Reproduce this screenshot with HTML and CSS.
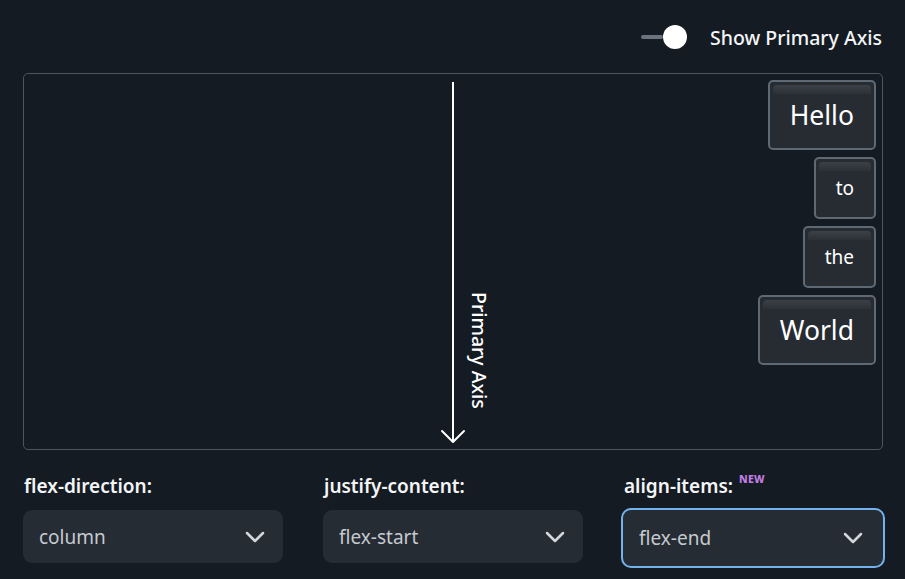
FILE: index.html
```html
<!DOCTYPE html>
<html lang="en">
<head>
<meta charset="utf-8">
<link rel="stylesheet" href="styles.css">
</head>
<body>
<main class="page">
  <div class="toolbar">
    <label class="toggle">
      <span class="switch"><span class="track"></span><span class="knob"></span></span>
      <span class="toggle-label">Show Primary Axis</span>
    </label>
  </div>
  <div class="demo">
    <div class="item big">Hello</div>
    <div class="item small">to</div>
    <div class="item small">the</div>
    <div class="item big">World</div>
    <div class="axis">
      <svg class="axis-svg" width="26" height="362" viewBox="0 0 26 362">
        <line x1="13" y1="0" x2="13" y2="359" stroke="#fff" stroke-width="2"/>
        <polyline points="2,349 13,360 24,349" fill="none" stroke="#fff" stroke-width="2" stroke-linecap="round" stroke-linejoin="round"/>
      </svg>
      <span class="axis-label">Primary Axis</span>
    </div>
  </div>
  <div class="controls">
    <div class="control">
      <div class="label">flex-direction:</div>
      <div class="select"><span>column</span><svg class="chev" width="20" height="12" viewBox="0 0 20 12"><polyline points="2,2 10,10 18,2" fill="none" stroke="#d3d7db" stroke-width="2.5" stroke-linecap="round" stroke-linejoin="round"/></svg></div>
    </div>
    <div class="control">
      <div class="label">justify-content:</div>
      <div class="select"><span>flex-start</span><svg class="chev" width="20" height="12" viewBox="0 0 20 12"><polyline points="2,2 10,10 18,2" fill="none" stroke="#d3d7db" stroke-width="2.5" stroke-linecap="round" stroke-linejoin="round"/></svg></div>
    </div>
    <div class="control">
      <div class="label">align-items:<sup class="new">NEW</sup></div>
      <div class="select focused"><span>flex-end</span><svg class="chev" width="20" height="12" viewBox="0 0 20 12"><polyline points="2,2 10,10 18,2" fill="none" stroke="#d3d7db" stroke-width="2.5" stroke-linecap="round" stroke-linejoin="round"/></svg></div>
    </div>
  </div>
</main>
</body>
</html>
```

FILE: styles.css
```css
html, body {
  margin: 0;
  padding: 0;
  background: #151b22;
  color: #fff;
  font-family: "Noto Sans", "Open Sans", sans-serif;
}

.page {
  width: 905px;
  height: 579px;
  box-sizing: border-box;
  padding: 0 22px 0 23px;
}

.toolbar {
  display: flex;
  justify-content: flex-end;
  align-items: center;
  height: 73px;
  box-sizing: border-box;
}

.toggle {
  display: flex;
  align-items: center;
  gap: 23px;
  margin-right: 1px;
  margin-top: 1px;
}

.switch {
  display: flex;
  align-items: center;
  width: 46px;
  height: 24px;
}

.track {
  width: 22px;
  height: 4px;
  border-radius: 2px;
  background: #6b747e;
}

.knob {
  width: 24px;
  height: 24px;
  border-radius: 50%;
  background: #fff;
}

.toggle-label {
  font-size: 19.5px;
  font-weight: 500;
  color: #f3f5f7;
}

.demo {
  position: relative;
  height: 377px;
  box-sizing: border-box;
  border: 1px solid #4c5661;
  border-radius: 5px;
  padding: 6px;
  display: flex;
  flex-direction: column;
  align-items: flex-end;
  gap: 7px;
}

.item {
  position: relative;
  box-sizing: border-box;
  display: flex;
  align-items: center;
  justify-content: center;
  padding: 0 20px;
  border: 2px solid #5e6974;
  border-radius: 5px;
  background: #272c33;
  color: #fff;
  line-height: 1;
  z-index: 1;
}

.item::before {
  content: "";
  position: absolute;
  top: 3px;
  left: 3px;
  right: 3px;
  height: 9px;
  border-radius: 4px 4px 0 0;
  background: linear-gradient(#3c4148, #2c3137);
}

.item.big {
  height: 70px;
  font-size: 26.5px;
}

.item.small {
  height: 62px;
  font-size: 19px;
}

.axis {
  position: absolute;
  left: 416px;
  top: 8px;
  width: 80px;
  height: 362px;
}

.axis-svg {
  position: absolute;
  left: 0;
  top: 0;
}

.axis-label {
  position: absolute;
  left: 26px;
  top: 210px;
  writing-mode: vertical-rl;
  font-size: 19.5px;
  font-weight: 500;
  color: #fff;
  white-space: nowrap;
}

.controls {
  display: grid;
  grid-template-columns: repeat(3, 1fr);
  column-gap: 40px;
  padding-top: 25px;
}

.label {
  font-size: 19px;
  font-weight: 600;
  color: #f3f5f7;
  height: 22px;
  line-height: 22px;
  margin-left: 1px;
}

.new {
  position: relative;
  top: -10px;
  vertical-align: baseline;
  font-size: 10.5px;
  font-weight: 800;
  color: #c27ee3;
  margin-left: 6px;
  letter-spacing: 0.3px;
}

.select {
  margin-top: 13px;
  height: 53px;
  box-sizing: border-box;
  border-radius: 9px;
  background: #262c33;
  display: flex;
  align-items: center;
  justify-content: space-between;
  padding: 0 18px 0 16px;
  font-size: 19px;
  color: #c5cad0;
}

.select.focused {
  margin: 11px -2px 0 -2px;
  height: 60px;
  border: 2px solid #72b3ee;
  border-radius: 10px;
  padding: 0 20px 0 16px;
}

.chev {
  display: block;
}
```
